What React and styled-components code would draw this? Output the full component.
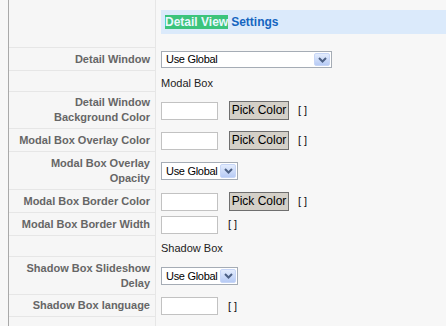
import React from 'react';
import styled, {createGlobalStyle} from 'styled-components';

const GlobalStyle = createGlobalStyle`
  body {
    margin: 0;
    background: #f7f7f7;
    font-family: "Liberation Sans", Arial, sans-serif;
    font-size: 11px;
  }
`;

const Page = styled.div`
  padding-left: 8px;
  height: 326px;
  overflow: hidden;
`;

const Panel = styled.div`
  border-left: 1px solid #a9a9a9;
  min-height: 326px;
`;

const Row = styled.div`
  display: grid;
  grid-template-columns: 147px 1fr;
  height: ${(props) => props.h}px;
`;

const Key = styled.div`
  display: flex;
  align-items: center;
  justify-content: flex-end;
  text-align: right;
  padding-right: 5px;
  background: #f6f6f6;
  border-bottom: 1px solid #e6e6e6;
  border-right: 1px solid #e6e6e6;
  color: #666;
  font-weight: bold;
  font-size: 11px;
  line-height: 15px;
`;

const Value = styled.div`
  display: flex;
  align-items: ${(props) => (props.section ? 'flex-end' : 'center')};
  padding: 0 0 ${(props) => (props.section ? 2 : 0)}px 5px;
  color: #222;
  line-height: 13px;
`;

const HeaderCell = styled.div`
  padding: 10px 0 0 5px;
`;

const HeaderBar = styled.div`
  height: 24px;
  display: flex;
  align-items: center;
  padding-left: 4px;
  background: #dbeafb;
  color: #1565c0;
  font-weight: bold;
  font-size: 12px;
  white-space: nowrap;
`;

const Mark = styled.span`
  background: #3cc47c;
  color: #eaf8ff;
  line-height: 14px;
  margin-right: 3px;
`;

const Select = styled.div`
  box-sizing: border-box;
  width: ${(props) => (props.wide ? 171 : 77)}px;
  height: ${(props) => (props.wide ? 17 : 18)}px;
  display: flex;
  align-items: center;
  justify-content: space-between;
  background: #fff;
  border: 1px solid #a5acb5;
  padding: 0 1px 0 4px;
  color: #000;
  font-size: 11px;
  letter-spacing: -0.3px;
  white-space: nowrap;
`;

const DropButton = styled.span`
  box-sizing: border-box;
  flex: none;
  width: 16px;
  height: ${(props) => (props.wide ? 13 : 14)}px;
  display: flex;
  align-items: center;
  justify-content: center;
  border: 1px solid #c7d6f7;
  border-radius: 2px;
  background: linear-gradient(#e3ecfd, #b7cbf5);
`;

const TextInput = styled.div`
  box-sizing: border-box;
  flex: none;
  width: 57px;
  height: 18px;
  background: #fff;
  border: 1px solid #c2c2c2;
`;

const PickButton = styled.div`
  box-sizing: border-box;
  flex: none;
  width: 60px;
  height: 19px;
  margin-left: 11px;
  display: flex;
  align-items: center;
  justify-content: center;
  background: #d4d0c8;
  border: 1px solid #6f6f6f;
  color: #000;
  font-size: 12px;
  white-space: nowrap;
`;

const Brackets = styled.span`
  margin-left: ${(props) => (props.after ? 9 : 10)}px;
  color: #111;
  font-size: 11px;
  white-space: nowrap;
`;

const Chevron = () => (
  <svg width="9" height="6" viewBox="0 0 9 6">
    <path d="M1 1 L4.5 4.5 L8 1" fill="none" stroke="#4d6185" strokeWidth="2" />
  </svg>
);

const Dropdown = ({wide}) => (
  <Select wide={wide}>
    <span>Use Global</span>
    <DropButton wide={wide}>
      <Chevron />
    </DropButton>
  </Select>
);

const ColorField = () => (
  <>
    <TextInput />
    <PickButton>Pick Color</PickButton>
    <Brackets after>[ ]</Brackets>
  </>
);

const rows = [
  {h: 23, label: 'Detail Window', field: <Dropdown wide />},
  {h: 21, section: 'Modal Box'},
  {h: 37, label: <>Detail Window<br />Background Color</>, field: <ColorField />},
  {h: 23, label: 'Modal Box Overlay Color', field: <ColorField />},
  {h: 38, label: <>Modal Box Overlay<br />Opacity</>, field: <Dropdown />},
  {h: 23, label: 'Modal Box Border Color', field: <ColorField />},
  {h: 23, label: 'Modal Box Border Width', field: <><TextInput /><Brackets>[ ]</Brackets></>},
  {h: 21, section: 'Shadow Box'},
  {h: 38, label: <>Shadow Box Slideshow<br />Delay</>, field: <Dropdown />},
  {h: 22, label: 'Shadow Box language', field: <><TextInput /><Brackets>[ ]</Brackets></>},
  {h: 30, label: ''},
];

export default function App() {
  return (
    <Page>
      <GlobalStyle />
      <Panel>
        <Row h={48}>
          <Key />
          <HeaderCell>
            <HeaderBar>
              <Mark>Detail View</Mark>Settings
            </HeaderBar>
          </HeaderCell>
        </Row>
        {rows.map((row, i) => (
          <Row h={row.h} key={i}>
            <Key>{row.label}</Key>
            {row.section
              ? <Value section>{row.section}</Value>
              : <Value>{row.field}</Value>}
          </Row>
        ))}
      </Panel>
    </Page>
  );
}
